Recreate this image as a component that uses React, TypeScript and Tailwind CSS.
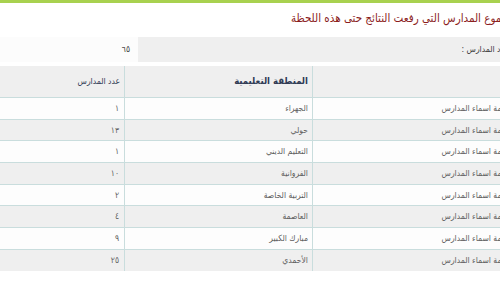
import React from "react";

const rows = [
    { area: "الجهراء", count: "١" },
    { area: "حولي", count: "١٣" },
    { area: "التعليم الديني", count: "١" },
    { area: "الفروانية", count: "١٠" },
    { area: "التربية الخاصة", count: "٢" },
    { area: "العاصمة", count: "٤" },
    { area: "مبارك الكبير", count: "٩" },
    { area: "الأحمدي", count: "٢٥" },
];

export default function App() {
    return (
        <div dir="ltr" className="w-[500px] h-[300px] overflow-hidden bg-white font-['DejaVu_Sans_Condensed','DejaVu_Sans',sans-serif]">
            <div className="h-[3px] bg-[#a8d14f]" />
            <div dir="rtl" className="w-[520px]">
                <h2 className="pt-[7px] pr-[6px] text-[11.5px] leading-[17px] text-[#8b1d1d]">
                    مجموع المدارس التي رفعت النتائج حتى هذه اللحظة
                </h2>

                {/* total */}
                <div className="mt-[10px] flex h-[25px] text-[8.5px]">
                    <div className="flex flex-1 items-center bg-[#efefef] pr-[11px] text-[#3a3a3a]">عدد المدارس :</div>
                    <div className="flex w-[138px] items-center bg-[#fcfcfc] pr-[8px] text-[#3a3a3a]">٦٥</div>
                </div>

                {/* table */}
                <div className="mt-[4px] text-[8.5px]">
                    <div className="grid h-[32px] grid-cols-[208px_188px_124px] border-b border-[#c9dddd] bg-[#efefef] text-[#2f3b55]">
                        <div className="border-l border-[#c9dddd]" />
                        <div className="flex items-center border-l border-[#c9dddd] pr-[4px] text-[9.5px] font-semibold">المنطقة التعليمية</div>
                        <div className="flex items-center pr-[4px]">عدد المدارس</div>
                    </div>
                    {rows.map((r, i) => (
                        <div
                            key={r.area}
                            className={`grid h-[21.67px] grid-cols-[208px_188px_124px] text-[#5f5f5f] ${i < rows.length - 1 ? "border-b border-[#c9dddd]" : ""} ${i % 2 ? "bg-[#efefef]" : "bg-[#fdfdfd]"}`}
                        >
                            <div className="flex items-center border-l border-[#c9dddd] pr-[10px]">قائمة اسماء المدارس</div>
                            <div className="flex items-center border-l border-[#c9dddd] pr-[4px]">{r.area}</div>
                            <div className="flex items-center pr-[5px]">{r.count}</div>
                        </div>
                    ))}
                </div>
            </div>
        </div>
    );
}
